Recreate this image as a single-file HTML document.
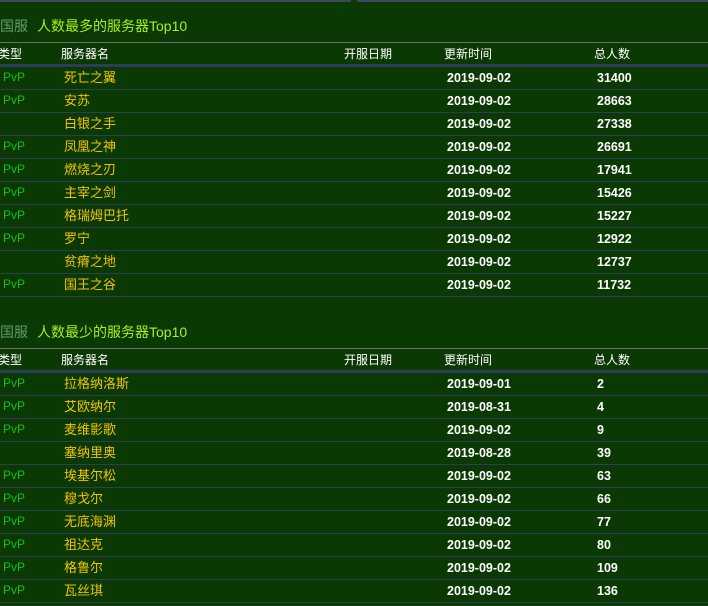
<!DOCTYPE html>
<html><head><meta charset="utf-8"><style>
*{margin:0;padding:0;box-sizing:border-box}
body{width:708px;height:606px;background:#0b3903;overflow:hidden;position:relative;font-family:"Liberation Sans","Noto Sans CJK SC",sans-serif;font-size:12px;color:#fff}
.top{position:absolute;top:0;height:2px;background:#3a4a5a}
.t{position:absolute;white-space:nowrap;line-height:14px}
.title{font-size:14px;line-height:16px}
.gf{color:#5f9a70}.tt{color:#a6f21a;position:absolute;left:37px}
.hl{position:absolute;left:0;width:708px;height:1px;background:#6e6e6e}
.hb{position:absolute;left:0;width:708px;height:3px;background:#2f3d5c}
.rl{position:absolute;left:0;width:708px;height:1px;background:#2e3d58}
.pvp{color:#16c016}.nm{color:#f2c200;font-size:13px}.d{font-weight:bold;font-size:12.5px}
</style></head><body>
<div class="top" style="left:0;width:351px"></div>
<div class="top" style="left:357px;width:351px"></div>
<div id="a"></div>
<script>
function sec(y0,title,rows){
 let h='';
 h+=`<div class="t title" style="left:0;top:${y0-8}px;width:300px"><span class="gf">国服</span><span class="tt">${title}</span></div>`;
 h+=`<div class="hl" style="top:${y0+16}px"></div>`;
 const hy=y0+21;
 h+=`<div class="t" style="left:-2px;top:${hy}px">类型</div><div class="t" style="left:61px;top:${hy}px">服务器名</div><div class="t" style="left:344px;top:${hy}px">开服日期</div><div class="t" style="left:444px;top:${hy}px">更新时间</div><div class="t" style="left:594px;top:${hy}px">总人数</div>`;
 h+=`<div class="hb" style="top:${y0+38}px"></div>`;
 rows.forEach((r,i)=>{const ty=y0+45+23*i;
  if(r[0])h+=`<div class="t pvp" style="left:3px;top:${ty-1}px">PvP</div>`;
  h+=`<div class="t nm" style="left:64px;top:${ty}px">${r[1]}</div><div class="t d" style="left:447px;top:${ty}px">${r[2]}</div><div class="t d" style="left:597px;top:${ty}px">${r[3]}</div>`;
  h+=`<div class="rl" style="top:${ty+18}px"></div>`;});
 return h;}
const A=[[1,'死亡之翼','2019-09-02',31400],[1,'安苏','2019-09-02',28663],[0,'白银之手','2019-09-02',27338],[1,'凤凰之神','2019-09-02',26691],[1,'燃烧之刃','2019-09-02',17941],[1,'主宰之剑','2019-09-02',15426],[1,'格瑞姆巴托','2019-09-02',15227],[1,'罗宁','2019-09-02',12922],[0,'贫瘠之地','2019-09-02',12737],[1,'国王之谷','2019-09-02',11732]];
const B=[[1,'拉格纳洛斯','2019-09-01',2],[1,'艾欧纳尔','2019-08-31',4],[1,'麦维影歌','2019-09-02',9],[0,'塞纳里奥','2019-08-28',39],[1,'埃基尔松','2019-09-02',63],[1,'穆戈尔','2019-09-02',66],[1,'无底海渊','2019-09-02',77],[1,'祖达克','2019-09-02',80],[1,'格鲁尔','2019-09-02',109],[1,'瓦丝琪','2019-09-02',136]];
document.getElementById('a').innerHTML=sec(26,'人数最多的服务器Top10',A)+sec(332,'人数最少的服务器Top10',B);
</script>
</body></html>
